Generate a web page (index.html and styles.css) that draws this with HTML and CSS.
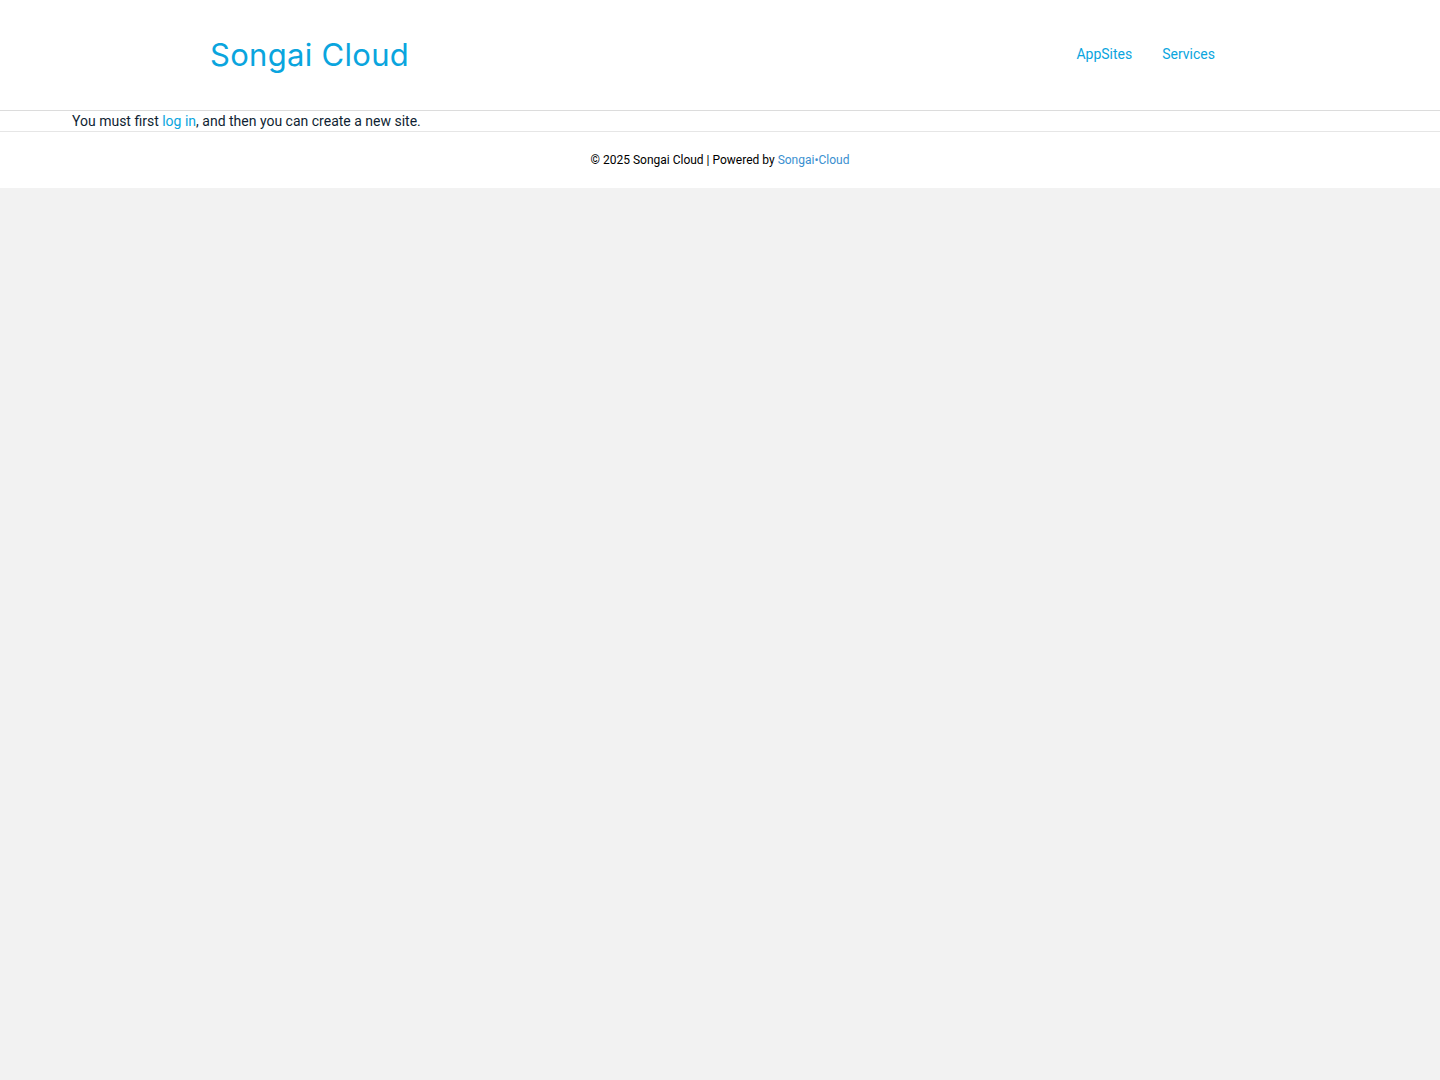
FILE: index.html
```html
<!DOCTYPE html>
<html>
<head>
    <title>Songai Cloud</title>
    <link rel="stylesheet" href="styles.css">
</head>
<body>
    <header class="site-header">
        <div class="header-inner">
            <a class="site-title" href="#">Songai Cloud</a>
            <nav class="main-nav">
                <a href="#">AppSites</a>
                <a href="#">Services</a>
            </nav>
        </div>
    </header>

    <main class="site-content">
        <p>You must first <a href="#">log in</a>, and then you can create a new site.</p>
    </main>

    <footer class="site-footer">
        <p>&copy; 2025 Songai Cloud | Powered by <a href="#">Songai&bull;Cloud</a></p>
    </footer>
</body>
</html>
```

FILE: styles.css
```css
body {
    margin: 0;
    font-family: Roboto, "Liberation Sans", sans-serif;
    background-color: #f2f2f2;
    color: #0f1f33;
}

a {
    text-decoration: none;
}

.site-header {
    background-color: #fff;
    border-bottom: 1px solid #dcdcdc;
}

.header-inner {
    width: 1020px;
    height: 110px;
    margin: 0 auto;
    display: flex;
    align-items: center;
    justify-content: space-between;
}

.site-title {
    font-family: Inter, "Open Sans", sans-serif;
    font-size: 31px;
    color: #0aa5de;
    letter-spacing: 0.3px;
    margin-top: -2px;
}

.main-nav {
    display: flex;
    margin-top: -2px;
}

.main-nav a {
    font-size: 14px;
    color: #0aa5de;
    padding: 0 15px;
}

.site-content {
    background-color: #fff;
    border-bottom: 1px solid #e6e6e6;
    padding: 0 72px;
}

.site-content p {
    margin: 0;
    font-size: 14px;
    line-height: 20px;
}

.site-content a {
    color: #0aa5de;
}

.site-footer {
    background-color: #fff;
    height: 56px;
    display: flex;
    align-items: center;
    justify-content: center;
}

.site-footer p {
    margin: 0;
    font-size: 12px;
    color: #000;
}

.site-footer a {
    color: #3a8fd0;
}
```
